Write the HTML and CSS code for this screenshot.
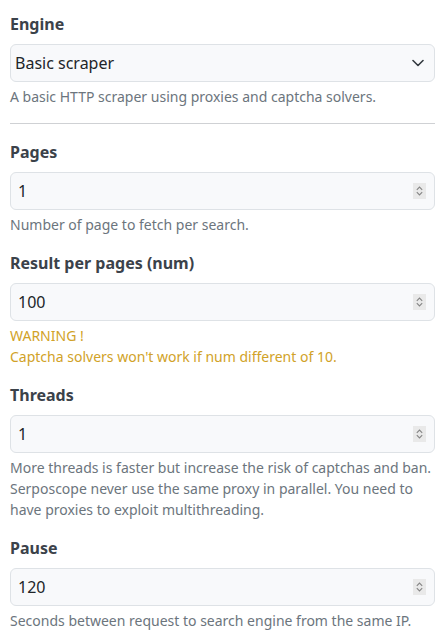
FILE: index.html
```html
<!DOCTYPE html>
<html lang="en">
<head>
<meta charset="utf-8">
<title>Scraper settings</title>
<link rel="stylesheet" href="styles.css">
</head>
<body>
<main class="form">
  <div class="group">
    <label class="label">Engine</label>
    <div class="field">
      <span class="value">Basic scraper</span>
      <svg class="caret" width="12" height="8" viewBox="0 0 12 8"><path d="M1 1.5 L6 6.5 L11 1.5" fill="none" stroke="#343a40" stroke-width="1.6" stroke-linecap="round" stroke-linejoin="round"/></svg>
    </div>
    <div class="help">A basic HTTP scraper using proxies and captcha solvers.</div>
  </div>
  <hr class="divider">
  <div class="group">
    <label class="label">Pages</label>
    <div class="field number">
      <span class="value">1</span>
      <span class="spin"><svg width="13" height="16" viewBox="0 0 13 16"><rect width="13" height="16" fill="#e9e9e9"/><path d="M3.8 6.8 L6.5 4.1 L9.2 6.8 M3.8 9.2 L6.5 11.9 L9.2 9.2" fill="none" stroke="#858585" stroke-width="1.1"/></svg></span>
    </div>
    <div class="help">Number of page to fetch per search.</div>
  </div>
  <div class="group">
    <label class="label">Result per pages (num)</label>
    <div class="field number">
      <span class="value">100</span>
      <span class="spin"><svg width="13" height="16" viewBox="0 0 13 16"><rect width="13" height="16" fill="#e9e9e9"/><path d="M3.8 6.8 L6.5 4.1 L9.2 6.8 M3.8 9.2 L6.5 11.9 L9.2 9.2" fill="none" stroke="#858585" stroke-width="1.1"/></svg></span>
    </div>
    <div class="help warning">WARNING !<br>Captcha solvers won't work if num different of 10.</div>
  </div>
  <div class="group">
    <label class="label">Threads</label>
    <div class="field number">
      <span class="value">1</span>
      <span class="spin"><svg width="13" height="16" viewBox="0 0 13 16"><rect width="13" height="16" fill="#e9e9e9"/><path d="M3.8 6.8 L6.5 4.1 L9.2 6.8 M3.8 9.2 L6.5 11.9 L9.2 9.2" fill="none" stroke="#858585" stroke-width="1.1"/></svg></span>
    </div>
    <div class="help">More threads is faster but increase the risk of captchas and ban. Serposcope never use the same proxy in parallel. You need to have proxies to exploit multithreading.</div>
  </div>
  <div class="group">
    <label class="label">Pause</label>
    <div class="field number">
      <span class="value">120</span>
      <span class="spin"><svg width="13" height="16" viewBox="0 0 13 16"><rect width="13" height="16" fill="#e9e9e9"/><path d="M3.8 6.8 L6.5 4.1 L9.2 6.8 M3.8 9.2 L6.5 11.9 L9.2 9.2" fill="none" stroke="#858585" stroke-width="1.1"/></svg></span>
    </div>
    <div class="help">Seconds between request to search engine from the same IP.</div>
  </div>
</main>
</body>
</html>
```

FILE: styles.css
```css
html, body {
  margin: 0;
  background: #ffffff;
}
body {
  font-family: "Noto Sans", "Open Sans", sans-serif;
  font-size: 16px;
  line-height: 1.5;
  color: #212529;
  padding: 12px 11px 0 10px;
}
.form {
  display: block;
}
.group {
  margin-bottom: 16px;
}
.label {
  display: block;
  font-weight: 700;
  font-size: 16px;
  line-height: 24px;
  color: #3b424a;
  margin-bottom: 8px;
}
.field {
  display: flex;
  align-items: center;
  box-sizing: border-box;
  height: 38px;
  border: 1px solid #dee2e6;
  border-radius: 6px;
  background: #f8f9fb;
  padding: 0 8px 0 4px;
}
.field.number {
  padding-left: 7px;
}
.value {
  flex: 1;
  font-size: 16px;
  line-height: 24px;
  color: #212529;
}
.caret {
  display: block;
  margin-right: 2px;
}
.spin {
  display: flex;
}
.spin svg {
  display: block;
}
.help {
  margin-top: 4px;
  font-size: 14px;
  line-height: 21px;
  color: #6c757d;
}
.warning {
  color: #d1a228;
}
.divider {
  margin: 16px 0;
  border: 0;
  border-top: 1px solid #cfd1d4;
  height: 0;
}
```
